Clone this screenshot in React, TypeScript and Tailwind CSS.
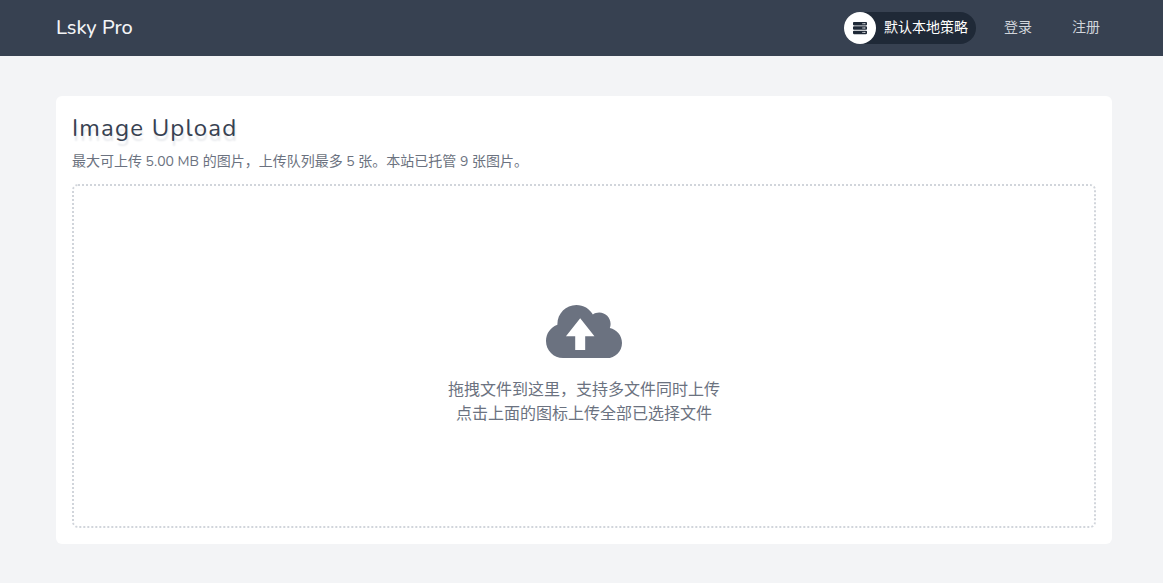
import React from 'react';
import { FaCloud, FaServer } from 'react-icons/fa';

const font = "font-['Nunito','Lato','Noto_Sans_CJK_SC',sans-serif]";

const UploadIcon = () => (
  <span className="relative w-[76px] h-[61px]">
    <FaCloud className="w-[76px] h-[61px]" />
    {/* square-cornered arrow sits on top of the cloud */}
    <svg viewBox="0 0 640 512" className="absolute inset-0 w-[76px] h-[61px]" fill="#fff">
      <polygon points="288,145 408,296 330,296 330,412 246,412 246,296 168,296" />
    </svg>
  </span>
);

const App: React.FC = () => {
  return (
    <div className={`min-h-[583px] bg-[#f3f4f6] ${font}`}>
      {/* Header */}
      <header className="h-14 bg-[#374151] pl-14 pr-[51px] flex items-center justify-between">
        <a className="text-xl font-medium text-gray-100">Lsky Pro</a>
        <nav className="flex items-center">
          <div className="flex items-center h-8 rounded-full bg-[#1f2937] pr-2">
            <span className="w-8 h-8 rounded-full bg-white flex items-center justify-center text-[#1f2937]">
              <FaServer className="w-3.5 h-3.5" />
            </span>
            <span className="ml-2 text-sm font-normal text-white">默认本地策略</span>
          </div>
          <a className="ml-4 px-3 text-sm text-[#d1d5db]">登录</a>
          <a className="ml-4 px-3 text-sm text-[#d1d5db]">注册</a>
        </nav>
      </header>

      {/* Upload card */}
      <main className="pl-14 pr-[51px] pt-10">
        <section className="bg-white rounded-md p-4 h-[448px] flex flex-col">
          <h1 className="text-2xl leading-8 tracking-wider text-[#374151] [text-shadow:1px_5px_2px_#e5e7eb]">Image Upload</h1>
          <p className="mt-2 text-sm leading-5 text-[#6b7280]">
            最大可上传 5.00 MB 的图片，上传队列最多 5 张。本站已托管 9 张图片。
          </p>
          <div className="mt-3 pt-[14px] flex-1 border-2 border-dotted border-[#d1d5db] rounded-md flex flex-col items-center justify-center text-[#6b7280]">
            <UploadIcon />
            <p className="mt-4 text-base leading-6 text-center">
              拖拽文件到这里，支持多文件同时上传
              <br />
              点击上面的图标上传全部已选择文件
            </p>
          </div>
        </section>
      </main>
    </div>
  );
};

export default App;
